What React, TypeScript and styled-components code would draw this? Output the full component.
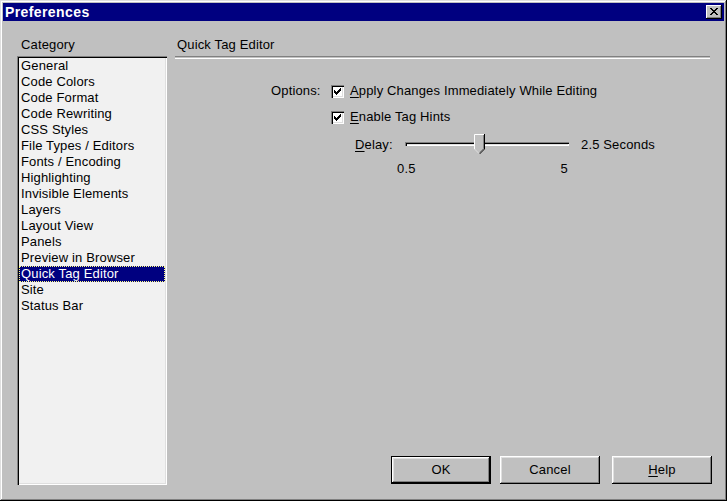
import React from 'react';
import styled, { createGlobalStyle } from 'styled-components';

const GlobalStyle = createGlobalStyle`
  html, body {
    margin: 0;
    padding: 0;
    background: #c0c0c0;
  }
  body {
    font-family: "Liberation Sans", Arial, sans-serif;
    font-size: 13px;
    letter-spacing: 0.15px;
    color: #000000;
  }
`;

const categories = [
  'General',
  'Code Colors',
  'Code Format',
  'Code Rewriting',
  'CSS Styles',
  'File Types / Editors',
  'Fonts / Encoding',
  'Highlighting',
  'Invisible Elements',
  'Layers',
  'Layout View',
  'Panels',
  'Preview in Browser',
  'Quick Tag Editor',
  'Site',
  'Status Bar',
];

const Window = styled.div`
  width: 727px;
  height: 501px;
  box-sizing: border-box;
  background: #c0c0c0;
  display: flex;
  flex-direction: column;
  padding: 3px;
  box-shadow: inset -1px -1px 0 #000000, inset 1px 1px 0 #dfdfdf,
    inset -2px -2px 0 #808080, inset 2px 2px 0 #ffffff;
`;

const TitleBar = styled.div`
  height: 18px;
  background: #000080;
  color: #ffffff;
  display: flex;
  align-items: center;
  justify-content: space-between;
  padding: 0 2px 0 2px;
  font-weight: bold;
  font-size: 14px;
  letter-spacing: 0.4px;
`;

const CloseButton = styled.div`
  width: 16px;
  height: 14px;
  box-sizing: border-box;
  background: #c0c0c0;
  display: flex;
  align-items: center;
  justify-content: center;
  padding-bottom: 1px;
  box-shadow: inset -1px -1px 0 #000000, inset 1px 1px 0 #ffffff,
    inset -2px -2px 0 #808080;
`;

const Body = styled.div`
  flex: 1;
  display: grid;
  grid-template-columns: 150px 1fr;
  column-gap: 8px;
  padding: 16px 13px 13px 14px;
`;

const LeftColumn = styled.div`
  display: flex;
  flex-direction: column;
`;

const GroupLabel = styled.div`
  height: 16px;
  line-height: 16px;
  padding-left: 4px;
  margin-bottom: 3px;
`;

const ListBox = styled.div`
  flex: 1;
  background: #f1f1f1;
  padding: 2px 1px;
  box-shadow: inset 1px 1px 0 #808080, inset 2px 2px 0 #000000,
    inset -1px -1px 0 #ffffff, inset -2px -2px 0 #dfdfdf;
`;

const ListItem = styled.div<{ $selected?: boolean }>`
  height: 16px;
  line-height: 15px;
  padding-left: 2px;
  margin: 0 1px;
  white-space: nowrap;
  box-sizing: border-box;
  background: ${p => (p.$selected ? '#000080' : 'transparent')};
  color: ${p => (p.$selected ? '#ffffff' : '#000000')};
  outline: ${p => (p.$selected ? '1px dotted #ffff80' : 'none')};
  outline-offset: -1px;
`;

const RightColumn = styled.div`
  display: flex;
  flex-direction: column;
`;

const PanelTitle = styled.div`
  height: 16px;
  line-height: 16px;
  padding-left: 2px;
  margin-bottom: 3px;
`;

const Separator = styled.div`
  height: 1px;
  border-top: 1px solid #808080;
  border-bottom: 1px solid #ffffff;
  margin-right: 1px;
`;

const Options = styled.div`
  display: grid;
  grid-template-columns: 60px auto;
  row-gap: 10px;
  padding: 24px 0 0 96px;
`;

const OptionsLabel = styled.div`
  height: 16px;
  line-height: 16px;
`;

const CheckRow = styled.div`
  display: flex;
  align-items: center;
  gap: 6px;
  height: 16px;
  line-height: 16px;
`;

const Box = styled.div`
  width: 13px;
  height: 13px;
  box-sizing: border-box;
  background: #ffffff;
  display: flex;
  align-items: center;
  justify-content: center;
  box-shadow: inset 1px 1px 0 #808080, inset 2px 2px 0 #000000,
    inset -1px -1px 0 #ffffff, inset -2px -2px 0 #dfdfdf;
`;

const Key = styled.span`
  text-decoration: underline;
  text-underline-offset: 2px;
`;

const SliderBlock = styled.div`
  grid-column: 2;
  display: flex;
  flex-direction: column;
  margin-top: -1px;
`;

const DelayRow = styled.div`
  display: flex;
  align-items: center;
  height: 20px;
  padding-left: 24px;
`;

const DelayLabel = styled.div`
  width: 50px;
`;

const Track = styled.div`
  position: relative;
  width: 164px;
  height: 4px;
  box-sizing: border-box;
  background: #c0c0c0;
  box-shadow: inset 1px 1px 0 #808080, inset 2px 2px 0 #000000,
    inset -1px -1px 0 #ffffff, inset -2px -2px 0 #dfdfdf;
`;

const Thumb = styled.svg`
  position: absolute;
  top: -8px;
  left: 69px;
`;

const DelayValue = styled.div`
  margin-left: 12px;
`;

const TickRow = styled.div`
  display: flex;
  justify-content: space-between;
  width: 171px;
  padding-left: 66px;
  margin-top: 7px;
  height: 16px;
  line-height: 16px;
`;

const Spacer = styled.div`
  flex: 1;
`;

const ButtonRow = styled.div`
  display: flex;
  justify-content: flex-end;
  gap: 9px;
  margin: 0 -1px 1px 0;
`;

const Button = styled.div<{ $default?: boolean; $gap?: number }>`
  width: 100px;
  height: 28px;
  box-sizing: border-box;
  display: flex;
  align-items: center;
  justify-content: center;
  padding-bottom: 2px;
  background: #c0c0c0;
  margin-left: ${p => p.$gap || 0}px;
  border: ${p => (p.$default ? '1px solid #000000' : 'none')};
  box-shadow: inset -1px -1px 0 #000000, inset 1px 1px 0 #ffffff,
    inset -2px -2px 0 #808080, inset 2px 2px 0 #dfdfdf;
`;

const Check = () => (
  <svg width="7" height="7" viewBox="0 0 7 7" shapeRendering="crispEdges">
    <path
      d="M6 0 H7 V3 H6 V4 H5 V5 H4 V6 H3 V7 H2 V6 H1 V5 H0 V2 H1 V3 H2 V4 H3 V3 H4 V2 H5 V1 H6 Z"
      fill="#000000"
    />
  </svg>
);

export default function App() {
  return (
    <>
      <GlobalStyle />
      <Window>
        <TitleBar>
          <span>Preferences</span>
          <CloseButton>
            <svg width="8" height="7" viewBox="0 0 8 7" shapeRendering="crispEdges">
              <path
                d="M0 0 H2 V1 H3 V2 H5 V1 H6 V0 H8 V1 H7 V2 H6 V3 H5 V4 H6 V5 H7 V6 H8 V7 H6 V6 H5 V5 H3 V6 H2 V7 H0 V6 H1 V5 H2 V4 H3 V3 H2 V2 H1 V1 H0 Z"
                fill="#000000"
              />
            </svg>
          </CloseButton>
        </TitleBar>
        <Body>
          <LeftColumn>
            <GroupLabel>Category</GroupLabel>
            <ListBox>
              {categories.map(c => (
                <ListItem key={c} $selected={c === 'Quick Tag Editor'}>
                  {c}
                </ListItem>
              ))}
            </ListBox>
          </LeftColumn>
          <RightColumn>
            <PanelTitle>Quick Tag Editor</PanelTitle>
            <Separator />
            <Options>
              <OptionsLabel>Options:</OptionsLabel>
              <CheckRow>
                <Box>
                  <Check />
                </Box>
                <span>
                  <Key>A</Key>pply Changes Immediately While Editing
                </span>
              </CheckRow>
              <div />
              <CheckRow>
                <Box>
                  <Check />
                </Box>
                <span>
                  <Key>E</Key>nable Tag Hints
                </span>
              </CheckRow>
              <SliderBlock>
                <DelayRow>
                  <DelayLabel>
                    <Key>D</Key>elay:
                  </DelayLabel>
                  <Track>
                    <Thumb width="11" height="20" viewBox="0 0 11 20">
                      <path d="M0 0 H11 V15 L6 20 H5 L0 15 Z" fill="#c0c0c0" />
                      <path d="M0.5 15 V0.5 H10" stroke="#ffffff" fill="none" />
                      <path d="M10.5 0 V15 L5.5 20" stroke="#000000" fill="none" />
                      <path d="M9.5 1 V14.6 L5.5 18.6" stroke="#808080" fill="none" />
                      <path d="M0.5 15 L5 19.5" stroke="#dfdfdf" fill="none" />
                    </Thumb>
                  </Track>
                  <DelayValue>2.5 Seconds</DelayValue>
                </DelayRow>
                <TickRow>
                  <span>0.5</span>
                  <span>5</span>
                </TickRow>
              </SliderBlock>
            </Options>
            <Spacer />
            <ButtonRow>
              <Button $default>OK</Button>
              <Button>Cancel</Button>
              <Button $gap={3}>
                <span>
                  <Key>H</Key>elp
                </span>
              </Button>
            </ButtonRow>
          </RightColumn>
        </Body>
      </Window>
    </>
  );
}
